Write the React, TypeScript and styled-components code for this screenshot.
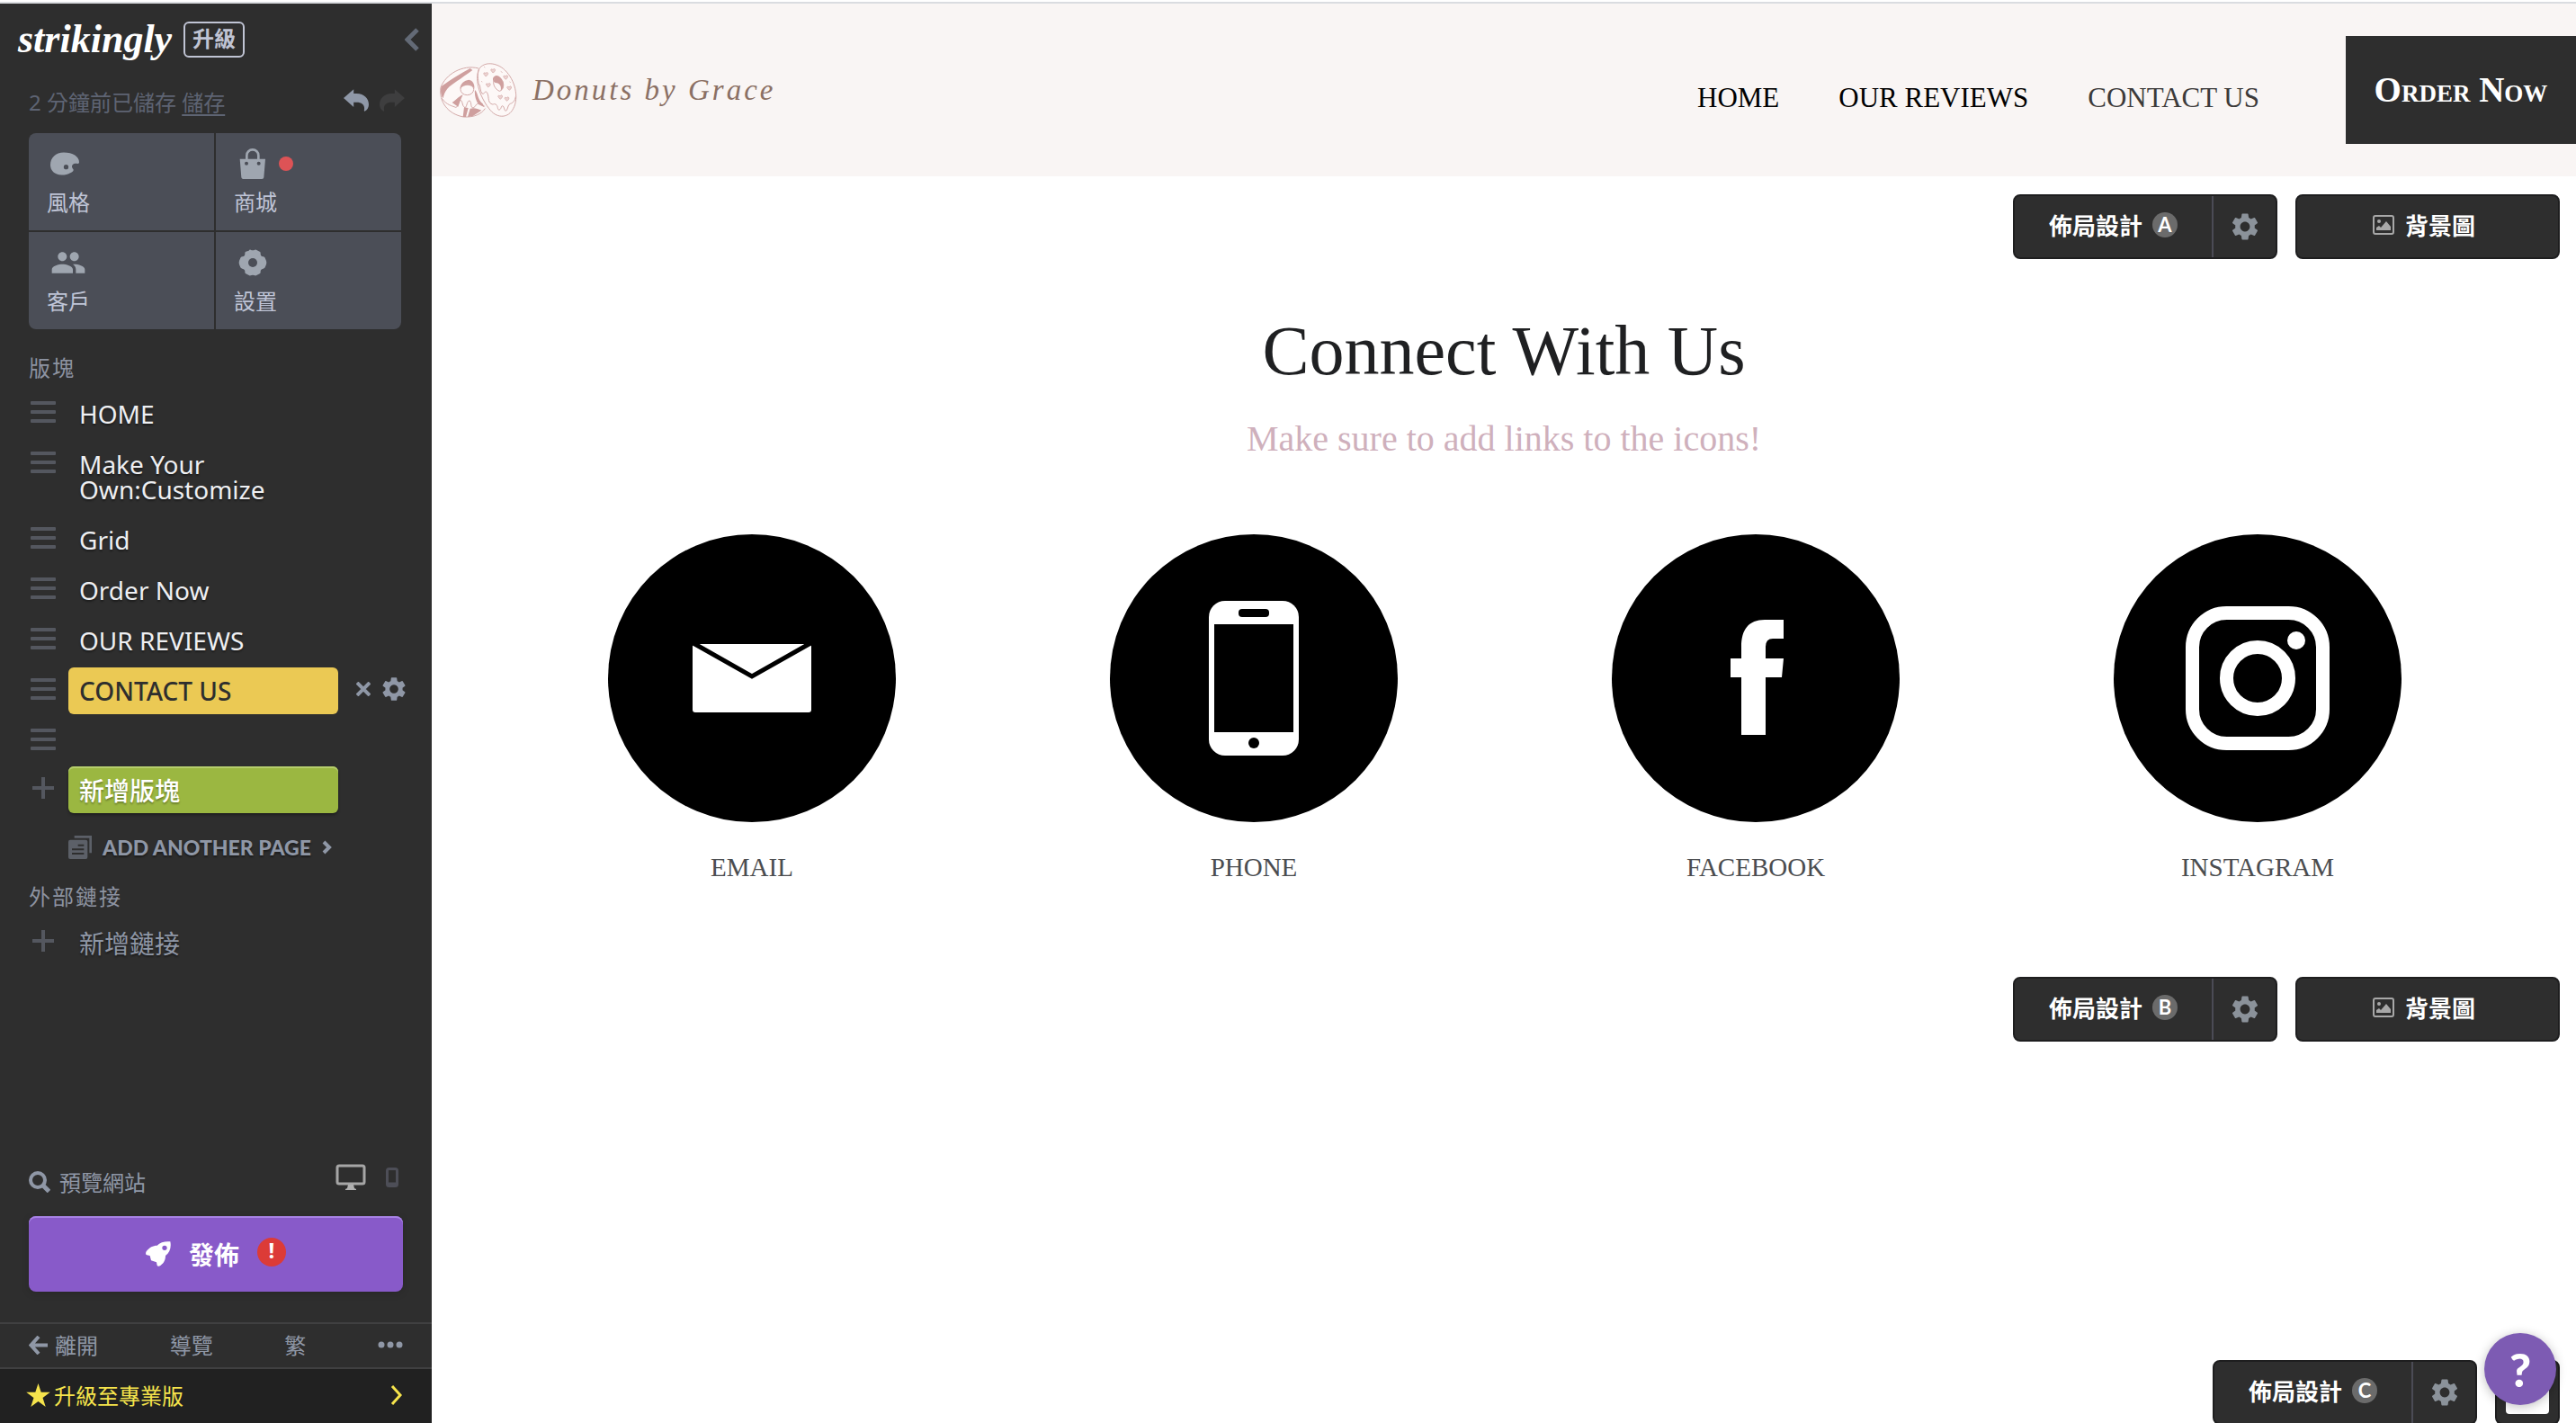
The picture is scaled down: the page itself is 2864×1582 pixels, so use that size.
import React from 'react';
import styled, { createGlobalStyle } from 'styled-components';
import { MdPeople, MdSettings } from 'react-icons/md';

const sans = `'Noto Sans', 'Noto Sans CJK TC', sans-serif`;
const cjk = `'Noto Sans CJK TC', 'Noto Sans', sans-serif`;
const serif = `'Liberation Serif', 'Noto Sans CJK TC', serif`;
const display = `Lato, 'Noto Sans', sans-serif`;

const GlobalStyle = createGlobalStyle`
  *, *::before, *::after { box-sizing: border-box; }
  body { margin: 0; background: #fff; overflow: hidden; }
  button { margin: 0; padding: 0; border: 0; background: none; color: inherit; font: inherit; cursor: pointer; }
  a { color: inherit; text-decoration: none; }
  ul { margin: 0; padding: 0; list-style: none; }
  h1, h2, p { margin: 0; font-weight: 400; }
  svg { display: block; flex: none; }
`;

const Page = styled.div`
  display: flex;
  flex-direction: column;
  height: 100vh;
  border-top: 2px solid #fff;
  font-family: ${sans};
`;

const Frame = styled.div`
  display: flex;
  flex: 1;
  min-height: 0;
  border-top: 2px solid #dadce0;
`;

/* ---------- Editor sidebar ---------- */

const Sidebar = styled.aside`
  display: flex;
  flex-direction: column;
  width: 480px;
  flex: none;
  background: #2e2e2e;
  color: #8f97a6;
  font-size: 24px;
  line-height: 32px;
`;

const Brand = styled.div`
  display: flex;
  align-items: center;
  height: 80px;
  padding: 0 14px 0 20px;
`;

const Wordmark = styled.a`
  width: 184px;
  color: #fff;
  font: italic 700 44px/44px ${serif};
`;

const UpgradeBadge = styled.button`
  height: 40px;
  width: 68px;
  padding-bottom: 4px;
  border: 2px solid #c0c4d4;
  border-radius: 6px;
  color: #c0c4d4;
  font: 700 24px/32px ${cjk};
`;

const Collapse = styled.button`
  margin-left: auto;
  color: #636a76;
`;

const SaveRow = styled.div`
  display: flex;
  align-items: center;
  gap: 12px;
  padding: 12px 30px 16px 32px;
  height: 64px;
  color: #5e6473;
`;

const SaveText = styled.p`
  flex: 1;
  line-height: 36px;
  button { text-decoration: underline; text-underline-offset: 4px; }
`;

const HistoryButton = styled.button<{ $dim?: boolean }>`
  color: ${p => (p.$dim ? '#3e3e3f' : '#8f98a8')};
  padding-bottom: 6px;
`;

const TileGrid = styled.div`
  display: grid;
  grid-template-columns: 1fr 1fr;
  gap: 2px;
  margin: 0 34px 26px 32px;
  border-radius: 8px;
  overflow: hidden;
`;

const Tile = styled.button`
  display: flex;
  flex-direction: column;
  height: 108px;
  padding: 12px 20px 0;
  background: #4b4e57;
  color: #bfc4d6;
  text-align: left;
  font: 400 24px/32px ${cjk};
`;

const TileIcon = styled.span`
  display: flex;
  align-items: center;
  gap: 14px;
  height: 44px;
  padding-left: 4px;
  margin-bottom: 4px;
  color: #9fa6b0;
`;

const Dot = styled.span`
  width: 16px;
  height: 16px;
  border-radius: 50%;
  background: #dd5356;
`;

const GroupLabel = styled.h2`
  padding-left: 32px;
  font: 400 24px/32px ${cjk};
  letter-spacing: 2px;
  color: #8d93a1;
`;

const Sections = styled.ul`
  display: flex;
  flex-direction: column;
  gap: 4px;
  margin-top: 10px;
`;

const Row = styled.li`
  display: grid;
  grid-template-columns: 28px 300px 1fr;
  column-gap: 14px;
  padding-left: 34px;
  padding-right: 26px;
`;

const RowHandle = styled.span`
  display: flex;
  align-items: center;
  justify-content: center;
  height: 48px;
  color: #54575f;
`;

type Tone = 'plain' | 'active' | 'add' | 'muted';
const tones: Record<Tone, string> = {
  plain: 'color: #eeeff2; text-shadow: 0 2px 2px rgba(0,0,0,.4);',
  active: 'background: #ebc954; color: #2e2e2e; font-weight: 500;',
  add: `background: #9bb741; color: #fff; font-family: ${cjk}; font-weight: 500; text-shadow: 0 2px 2px rgba(0,0,0,.3); box-shadow: inset 0 2px #b6ce6c, 0 2px 3px rgba(0,0,0,.35);`,
  muted: `color: #8f97a6; font-family: ${cjk}; text-shadow: 0 2px 2px rgba(0,0,0,.4);`,
};

const RowButton = styled.button<{ $tone: Tone; $empty?: boolean }>`
  min-height: ${p => (p.$empty ? 50 : 52)}px;
  padding: 12px;
  border-radius: 6px;
  text-align: left;
  font-size: 28px;
  line-height: 28px;
  ${p => tones[p.$tone]}
`;

const RowTools = styled.span`
  display: flex;
  align-items: center;
  justify-content: flex-end;
  gap: 10px;
  height: 48px;
  color: #8f97a6;
  button { display: flex; }
`;

const AddPage = styled.button`
  display: flex;
  align-items: center;
  gap: 12px;
  margin: 22px 0 22px;
  padding-left: 76px;
  font: 900 23px/32px ${display};
  text-shadow: 0 2px 2px rgba(0,0,0,.4);
`;

const Spacer = styled.div`
  flex: 1;
`;

const PreviewRow = styled.div`
  display: flex;
  align-items: center;
  padding: 0 37px 0 32px;
  margin-bottom: 18px;
`;

const PreviewButton = styled.button`
  display: flex;
  align-items: center;
  gap: 10px;
  margin-right: auto;
  font: 400 24px/36px ${cjk};
`;

const Devices = styled.span`
  display: flex;
  align-items: center;
  gap: 22px;
  padding-bottom: 10px;
`;

const Publish = styled.button`
  display: flex;
  align-items: center;
  justify-content: center;
  gap: 20px;
  height: 84px;
  margin: 0 32px 34px;
  border-radius: 8px;
  background: #885ac9;
  box-shadow: inset 0 2px #a883e6, 0 2px 8px rgba(0,0,0,.15);
  color: #fff;
  font: 700 28px/40px ${cjk};
`;

const Alert = styled.span`
  width: 32px;
  height: 32px;
  margin-bottom: 4px;
  border-radius: 50%;
  background: #dc3b37;
  font: 700 24px/28px ${sans};
  text-align: center;
`;

const FooterNav = styled.nav`
  display: flex;
  align-items: center;
  justify-content: space-between;
  height: 52px;
  padding: 0 32px 2px;
  border-top: 2px solid #404041;
  border-bottom: 2px solid #404041;
  font: 400 24px/32px ${cjk};
  button { display: flex; align-items: center; gap: 8px; }
`;

const ProLink = styled.a`
  display: flex;
  align-items: center;
  gap: 4px;
  height: 60px;
  padding: 0 32px 2px 29px;
  background: #212121;
  color: #f6e44c;
  font: 400 24px/32px ${cjk};
  svg:last-child { margin-left: auto; }
`;

/* ---------- Site preview ---------- */

const Site = styled.main`
  flex: 1;
  min-width: 0;
  overflow: hidden;
  background: #fff;
  font-family: ${serif};
`;

const SiteHeader = styled.header`
  display: flex;
  align-items: center;
  height: 192px;
  padding-left: 8px;
  background: #f9f5f4;
`;

const SiteLogo = styled.a`
  display: flex;
  align-items: center;
  gap: 16px;
  margin-right: auto;
  color: #8b7064;
  font: italic 400 33px/44px ${serif};
  letter-spacing: 3px;
`;

const SiteNav = styled.nav`
  display: flex;
  gap: 66px;
  margin-right: 96px;
  padding-top: 18px;
`;

const NavLink = styled.a<{ $current?: boolean }>`
  color: ${p => (p.$current ? '#3c3a3a' : '#000')};
  font-size: 31px;
  line-height: 44px;
`;

const OrderButton = styled.a`
  display: flex;
  align-items: center;
  justify-content: center;
  width: 256px;
  height: 120px;
  background: #2e2e2e;
  color: #fff;
  font: 700 39px/44px ${serif};
  font-variant-caps: small-caps;
`;

const Section = styled.section<{ $minHeight: number }>`
  min-height: ${p => p.$minHeight}px;
  padding-top: 20px;
`;

const Toolbar = styled.div`
  display: flex;
  justify-content: flex-end;
  gap: 20px;
  padding-right: 18px;
  color: #fff;
  font: 700 26px/36px ${cjk};
  text-shadow: 0 2px 2px rgba(0,0,0,.5);
`;

const ToolGroup = styled.div`
  display: flex;
  width: 294px;
  height: 72px;
  border: 2px solid #1e1e1f;
  border-radius: 8px;
  background: #2e2e2e;
`;

const LayoutButton = styled.button`
  display: flex;
  flex: 1;
  align-items: center;
  justify-content: center;
  gap: 11px;
  padding-bottom: 4px;
`;

const Letter = styled.span`
  width: 28px;
  height: 28px;
  border-radius: 50%;
  background: #6b6b6b;
  font: 700 22px/28px ${display};
  text-shadow: none;
  text-align: center;
`;

const GearButton = styled.button`
  display: flex;
  align-items: center;
  justify-content: center;
  width: 71px;
  border-left: 2px solid #4b4b55;
  color: #8b929a;
`;

const BackgroundButton = styled.button<{ $compact?: boolean }>`
  display: flex;
  align-items: center;
  justify-content: center;
  gap: 12px;
  width: ${p => (p.$compact ? 72 : 294)}px;
  height: 72px;
  padding: ${p => (p.$compact ? '0' : '0 8px 4px 0')};
  border: 2px solid #1e1e1f;
  border-radius: 8px;
  background: #2e2e2e;
`;

const Heading = styled.h1`
  padding-top: 54px;
  color: #1f2022;
  font-size: 78px;
  line-height: 96px;
  text-align: center;
`;

const Subheading = styled.p`
  padding-top: 24px;
  color: #cfb0bc;
  font-size: 40px;
  line-height: 52px;
  text-align: center;
`;

const Contacts = styled.ul`
  display: grid;
  grid-template-columns: repeat(4, 1fr);
  padding: 80px 75px 0 77px;
`;

const Contact = styled.li`
  display: flex;
  justify-content: center;
  a { display: flex; flex-direction: column; align-items: center; gap: 30px; }
  color: #4b4d50;
  font-size: 29px;
  line-height: 40px;
`;

const Help = styled.button`
  position: fixed;
  right: 22px;
  bottom: 20px;
  width: 80px;
  height: 80px;
  border-radius: 50%;
  background: #7d5bb3;
  box-shadow: 0 2px 12px rgba(0,0,0,.25);
  color: #fff;
  font: 900 52px/80px ${display};
`;

/* ---------- Icons ---------- */

const Chevron = ({ w, h, stroke, left }: { w: number; h: number; stroke: number; left?: boolean }) => (
  <svg width={w} height={h} viewBox={`0 0 ${w} ${h}`} fill="none" stroke="currentColor" strokeWidth={stroke}>
    <path d={left ? `M${w - 2} 2 L3 ${h / 2} L${w - 2} ${h - 2}` : `M2 2 L${w - 3} ${h / 2} L2 ${h - 2}`} />
  </svg>
);

const Undo = ({ flip }: { flip?: boolean }) => (
  <svg width="28" height="25" viewBox="0 0 85 75" fill="currentColor">
    <path transform={flip ? 'translate(85 0) scale(-1 1)' : undefined}
      d="M0 30 34 0V15H44C70 16 85 32 85 52C85 62 80 70 71 75C69 74 69 72 70 68C72 52 60 44 44 44H34V60Z" />
  </svg>
);

const Palette = () => (
  <svg width="32" height="26" viewBox="0 0 97 76" fill="currentColor" fillRule="evenodd">
    <path d="M45 0C76 0 97 14 97 33C97 42 88 35 80 38C71 42 71 50 77 56C80 62 74 66 67 69C60 74 50 76 38 76C14 76 0 61 0 42C0 18 18 0 45 0ZM53 41a8 8 0 1 0 0 16a8 8 0 1 0 0-16Z" />
  </svg>
);

const Bag = () => (
  <svg width="32" height="34" viewBox="-8 0 96 102" fill="currentColor" fillRule="evenodd">
    <path d="M0 35H85L80 97Q79 102 74 102H11Q6 102 5 97ZM22 44a6 6 0 1 0 0 12a6 6 0 1 0 0-12ZM63 44a6 6 0 1 0 0 12a6 6 0 1 0 0-12Z" />
    <path d="M23 36V23a19.500 19 0 0 1 39 0V36" fill="none" stroke="currentColor" strokeWidth="8" />
  </svg>
);

const Cog = () => (
  <svg width="33" height="32" viewBox="0 0 99 96" fill="currentColor">
    <path d="M38 8Q40 4 44 5Q51 9 58 5Q62 4 64 6L74 11Q78 13 77 17Q76 26 86 28Q91 29 92 32L96 42Q98 48 96 54L92 64Q91 67 86 68Q76 70 77 79Q78 83 74 85L64 90Q62 92 58 91Q51 87 44 91Q40 92 38 90L28 85Q24 83 25 79Q26 70 16 68Q11 67 10 64L6 54Q4 48 6 42L10 32Q11 29 16 28Q26 26 25 17Q24 13 28 11Z" />
    <circle cx="51" cy="48" r="15" fill="#4b4e57" />
  </svg>
);

const Bars = () => (
  <svg width="28" height="26" viewBox="0 0 28 26" fill="currentColor">
    <rect y="1" width="28" height="4" rx="1" />
    <rect y="11" width="28" height="4" rx="1" />
    <rect y="21" width="28" height="4" rx="1" />
  </svg>
);

const Plus = () => (
  <svg width="24" height="24" viewBox="0 0 24 24" stroke="currentColor" strokeWidth="4">
    <path d="M12 0V24M0 12H24" />
  </svg>
);

const Cross = () => (
  <svg width="16" height="16" viewBox="0 0 16 16" stroke="currentColor" strokeWidth="4">
    <path d="M1 1 15 15M15 1 1 15" />
  </svg>
);

const Pages = () => (
  <svg width="26" height="26" viewBox="0 0 78 78" fill="none">
    <path d="M20 4H74V58" stroke="#5c6068" strokeWidth="8" />
    <rect y="14" width="64" height="64" rx="6" fill="#5c6068" />
    <path d="M32 32H52M12 46H52M12 60H52" stroke="#2e2e2e" strokeWidth="6" />
  </svg>
);

const Search = () => (
  <svg width="24" height="24" viewBox="0 0 24 24" fill="none" stroke="currentColor" strokeWidth="4">
    <circle cx="10" cy="10" r="8" />
    <path d="M15.500 15.500 22.500 22.500" strokeWidth="5" />
  </svg>
);

const Monitor = () => (
  <svg width="34" height="30" viewBox="0 0 34 30" fill="none">
    <rect x="2" y="2" width="30" height="20" rx="2" stroke="#a6a6a6" strokeWidth="3" />
    <path d="M14 23H20L21 27 23 28V29H11V28L13 27Z" fill="#b0b0b0" />
  </svg>
);

const Mobile = () => (
  <svg width="14" height="22" viewBox="0 0 14 22" fill="none">
    <rect x="1.500" y="1.500" width="11" height="19" rx="2" stroke="#4d4e57" strokeWidth="3" />
    <path d="M1 18.500H13" stroke="#4d4e57" strokeWidth="4" />
  </svg>
);

const Rocket = () => (
  <svg width="28" height="28" viewBox="0 0 84 84" fill="currentColor" fillRule="evenodd">
    <path d="M82 1C66-1 48 3 38 14C24 14 12 20 2 34C-1 40 0 44 4 46L14 48L18 64L36 70L38 80C40 85 45 84 50 80C62 72 66 60 66 48C80 38 86 20 82 1ZM63 14a8 8 0 1 1 0 16a8 8 0 1 1 0-16Z" />
  </svg>
);

const ArrowLeft = () => (
  <svg width="21" height="21" viewBox="0 0 21 21" fill="none" stroke="currentColor" strokeWidth="4">
    <path d="M11 1 2.500 10.500 11 20M3 10.500H21" />
  </svg>
);

const Ellipsis = () => (
  <svg width="28" height="8" viewBox="0 0 28 8" fill="currentColor">
    <circle cx="4" cy="4" r="3.500" /><circle cx="14" cy="4" r="3.500" /><circle cx="24" cy="4" r="3.500" />
  </svg>
);

const Star = () => (
  <svg width="27" height="26" viewBox="0 0 100 98" fill="currentColor">
    <path d="M50 0 62 37H100L69 60 81 98 50 75 19 98 31 60 0 37H38Z" />
  </svg>
);

const Picture = () => (
  <svg width="24" height="22" viewBox="0 0 24 22" fill="none">
    <rect x="1" y="1" width="22" height="20" rx="2" stroke="#a8a8a8" strokeWidth="2" />
    <circle cx="7" cy="7" r="2" fill="#a8a8a8" />
    <path d="M4 17V14L7 12 9 14 15 7 20 13V17Z" fill="#a8a8a8" />
  </svg>
);

const Blank = () => (
  <svg width="48" height="48" viewBox="0 0 48 48"><rect width="48" height="48" rx="4" fill="#fff" /></svg>
);

const Donuts = () => (
  <svg width="88" height="64" viewBox="0 0 264 192" fill="none" stroke="#d3a9a8" strokeWidth="3" strokeLinejoin="round">
    {/* back donut */}
    <path d="M132 24C78 10 22 44 6 88C0 134 28 176 82 186C118 188 142 176 154 158" fill="#fdf8f7" />
    <path d="M8 84C34 66 66 44 104 24L112 30C80 54 44 76 28 92C20 102 16 112 14 124C6 112 4 98 8 84Z" fill="#cf9f9e" stroke="none" />
    <path d="M70 92C72 74 84 64 100 62C112 64 120 76 118 92C108 76 84 76 70 92Z" fill="#cf9f9e" stroke="none" />
    <ellipse cx="94" cy="94" rx="22" ry="19" />
    <path d="M10 124C24 146 46 150 56 154C66 154 60 134 70 130C80 128 76 150 86 154C94 156 92 132 102 132C110 134 104 156 114 156C124 152 122 140 134 142C142 144 146 150 152 150" />
    <path d="M44 138C58 130 62 120 80 112L72 130 64 152ZM84 154L98 156 90 186H80ZM120 96C132 108 128 128 146 142L152 154 132 144C122 130 118 110 120 96ZM104 158C118 154 128 158 142 164L112 184 96 186Z" fill="#cf9f9e" stroke="none" />
    {/* front donut with hearts and icing drips */}
    <path d="M134 26C150 0 194 4 220 30C254 62 268 122 248 158C232 190 196 192 172 164C140 126 116 66 134 26Z" fill="#fdf8f7" />
    <path d="M134 26C126 46 132 62 132 74C140 80 136 100 144 108C154 112 152 96 160 104C168 116 162 136 174 142C184 148 182 138 192 146C198 152 194 164 202 162C210 158 206 146 214 150C220 158 218 170 226 164C232 152 230 146 238 142C246 140 254 132 256 118" />
    <path d="M184 52C194 42 208 54 214 68C218 82 216 90 206 98C210 82 200 72 188 72C178 68 178 56 184 52Z" fill="#cf9f9e" stroke="none" />
    <path d="M186 58C176 72 186 94 202 100C216 96 218 78 212 66" />
    {[[156, 42], [180, 30], [164, 78], [222, 52], [234, 88], [204, 118], [226, 124]].map(([x, y]) => (
      <path key={`${x}-${y}`} d={`M${x} ${y + 9}l-7-9q0-6 7-2q6-6 8 1q0 6-8 10Z`} strokeWidth="2" fill="#ecd3d2" />
    ))}
    <path d="M150 18l4 4M206 34l6 4M142 66l2 4M236 68l3 4" strokeWidth="2" />
  </svg>
);

const Disc = ({ children }: { children: React.ReactNode }) => (
  <svg width="320" height="320" viewBox="0 0 320 320" fill="#fff">
    <circle cx="160" cy="160" r="160" fill="#000" />
    {children}
  </svg>
);

const contacts = [
  {
    name: 'EMAIL',
    art: (
      <Disc>
        <rect x="94" y="122" width="132" height="76" rx="3" />
        <path d="M93 120 160 158 227 120" fill="none" stroke="#000" strokeWidth="5" />
      </Disc>
    ),
  },
  {
    name: 'PHONE',
    art: (
      <Disc>
        <rect x="110" y="74" width="100" height="172" rx="18" />
        <rect x="116" y="100" width="88" height="120" fill="#000" />
        <rect x="143" y="83" width="34" height="9" rx="4" fill="#000" />
        <circle cx="160" cy="232" r="6" fill="#000" />
      </Disc>
    ),
  },
  {
    name: 'FACEBOOK',
    art: (
      <Disc>
        <path d="M191 95V116H179Q171 116 171 125V138H191L189 159H171V223H144V159H132V138H144V125C144 106 152 95 170 95Z" />
      </Disc>
    ),
  },
  {
    name: 'INSTAGRAM',
    art: (
      <Disc>
        <g fill="none" stroke="#fff" strokeWidth="15">
          <rect x="87.500" y="87.500" width="145" height="145" rx="38" />
          <circle cx="160" cy="160" r="34.500" />
        </g>
        <circle cx="203" cy="118" r="10" />
      </Disc>
    ),
  },
];

const sections = ['HOME', 'Make Your Own:Customize', 'Grid', 'Order Now', 'OUR REVIEWS'];

const LayoutTools = ({ letter, compact }: { letter: string; compact?: boolean }) => (
  <Toolbar>
    <ToolGroup>
      <LayoutButton>佈局設計<Letter>{letter}</Letter></LayoutButton>
      <GearButton aria-label="設置"><MdSettings size={36} /></GearButton>
    </ToolGroup>
    {compact ? (
      <BackgroundButton $compact aria-label="背景圖"><Blank /></BackgroundButton>
    ) : (
      <BackgroundButton><Picture />背景圖</BackgroundButton>
    )}
  </Toolbar>
);

export default function App() {
  return (
    <Page>
      <GlobalStyle />
      <Frame>
        <Sidebar>
          <Brand>
            <Wordmark href="#">strikingly</Wordmark>
            <UpgradeBadge>升級</UpgradeBadge>
            <Collapse aria-label="收起"><Chevron w={16} h={26} stroke={5} left /></Collapse>
          </Brand>
          <SaveRow>
            <SaveText>2 分鐘前已儲存 <button>儲存</button></SaveText>
            <HistoryButton aria-label="復原"><Undo /></HistoryButton>
            <HistoryButton $dim aria-label="重做"><Undo flip /></HistoryButton>
          </SaveRow>
          <TileGrid>
            <Tile><TileIcon><Palette /></TileIcon>風格</Tile>
            <Tile><TileIcon><Bag /><Dot /></TileIcon>商城</Tile>
            <Tile><TileIcon><MdPeople size={40} /></TileIcon>客戶</Tile>
            <Tile><TileIcon><Cog /></TileIcon>設置</Tile>
          </TileGrid>
          <GroupLabel>版塊</GroupLabel>
          <Sections>
            {sections.map(name => (
              <Row key={name}>
                <RowHandle><Bars /></RowHandle>
                <RowButton $tone="plain">{name}</RowButton>
              </Row>
            ))}
            <Row>
              <RowHandle><Bars /></RowHandle>
              <RowButton $tone="active">CONTACT US</RowButton>
              <RowTools>
                <button aria-label="刪除"><Cross /></button>
                <button aria-label="設置"><MdSettings size={32} /></button>
              </RowTools>
            </Row>
            <Row>
              <RowHandle><Bars /></RowHandle>
              <RowButton $tone="plain" $empty aria-label="版塊" />
            </Row>
            <Row>
              <RowHandle><Plus /></RowHandle>
              <RowButton $tone="add">新增版塊</RowButton>
            </Row>
          </Sections>
          <AddPage><Pages />ADD ANOTHER PAGE<Chevron w={11} h={16} stroke={4} /></AddPage>
          <GroupLabel>外部鏈接</GroupLabel>
          <Sections>
            <Row>
              <RowHandle><Plus /></RowHandle>
              <RowButton $tone="muted">新增鏈接</RowButton>
            </Row>
          </Sections>
          <Spacer />
          <PreviewRow>
            <PreviewButton><Search />預覽網站</PreviewButton>
            <Devices><Monitor /><Mobile /></Devices>
          </PreviewRow>
          <Publish><Rocket />發佈<Alert>!</Alert></Publish>
          <FooterNav>
            <button><ArrowLeft />離開</button>
            <button>導覽</button>
            <button>繁</button>
            <button aria-label="更多"><Ellipsis /></button>
          </FooterNav>
          <ProLink href="#"><Star />升級至專業版<Chevron w={14} h={24} stroke={3} /></ProLink>
        </Sidebar>
        <Site>
          <SiteHeader>
            <SiteLogo href="#"><Donuts />Donuts by Grace</SiteLogo>
            <SiteNav>
              <NavLink href="#">HOME</NavLink>
              <NavLink href="#">OUR REVIEWS</NavLink>
              <NavLink href="#" $current>CONTACT US</NavLink>
            </SiteNav>
            <OrderButton href="#"><span>Order Now</span></OrderButton>
          </SiteHeader>
          <Section $minHeight={870}>
            <LayoutTools letter="A" />
            <Heading>Connect With Us</Heading>
            <Subheading>Make sure to add links to the icons!</Subheading>
            <Contacts>
              {contacts.map(c => (
                <Contact key={c.name}><a href="#">{c.art}{c.name}</a></Contact>
              ))}
            </Contacts>
          </Section>
          <Section $minHeight={426}>
            <LayoutTools letter="B" />
          </Section>
          <Section $minHeight={92}>
            <LayoutTools letter="C" compact />
          </Section>
        </Site>
      </Frame>
      <Help aria-label="幫助">?</Help>
    </Page>
  );
}
